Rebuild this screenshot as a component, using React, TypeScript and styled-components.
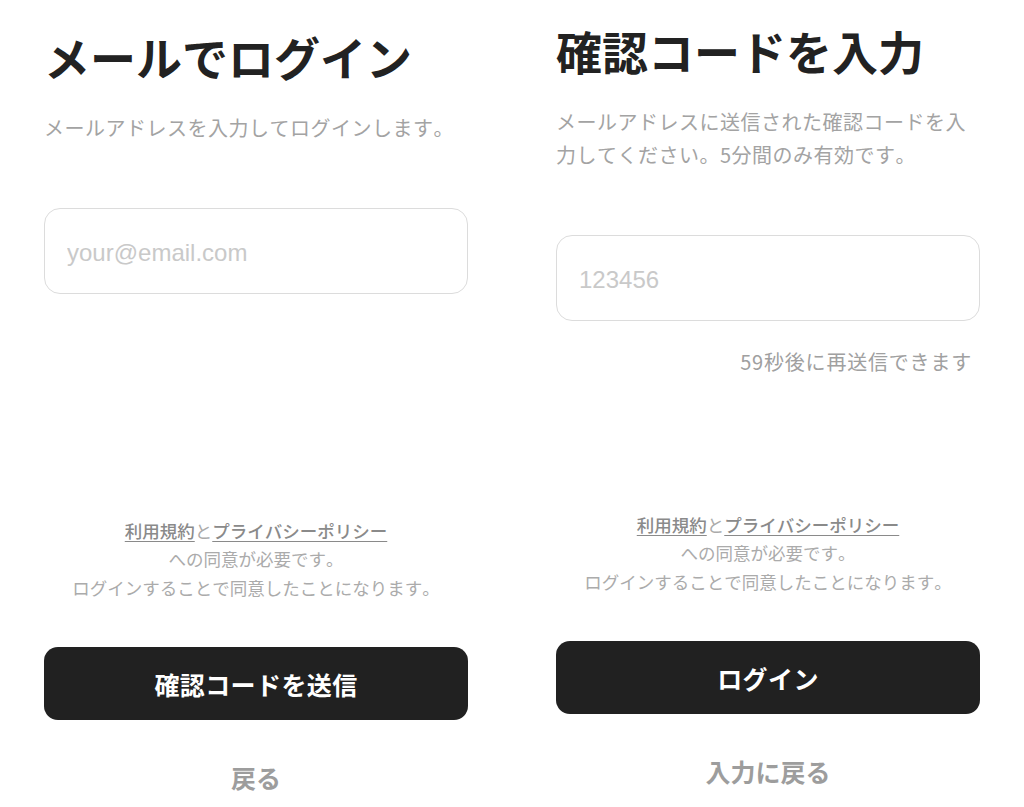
import React from "react";
import styled, { createGlobalStyle } from "styled-components";

const GlobalStyle = createGlobalStyle`
  html, body {
    margin: 0;
    padding: 0;
    background: #ffffff;
  }
  body {
    font-family: "Noto Sans CJK JP", "Noto Sans", sans-serif;
    font-kerning: none;
    text-spacing-trim: space-all;
    -webkit-font-smoothing: antialiased;
  }
  * { box-sizing: border-box; }
`;

const Page = styled.div`
  display: grid;
  grid-template-columns: 424px 424px;
  column-gap: 88px;
  padding: 0 44px;
  width: 1024px;
  height: 807px;
  overflow: hidden;
`;

const Panel = styled.section<{ $top: number; $bottom: number }>`
  display: flex;
  flex-direction: column;
  height: 807px;
  padding-top: ${(p) => p.$top}px;
  padding-bottom: ${(p) => p.$bottom}px;
`;

const Title = styled.h1`
  margin: 0;
  font-size: 46px;
  line-height: 60px;
  font-weight: 700;
  color: #222222;
  letter-spacing: 0;
`;

const Lead = styled.p`
  margin: 25px 0 0;
  font-size: 20px;
  line-height: 33px;
  font-weight: 400;
  color: #a3a3a3;
  letter-spacing: 0.5px;
`;

const Field = styled.input`
  margin-top: 64px;
  width: 100%;
  height: 86px;
  border: 1.5px solid #dcdcdc;
  border-radius: 16px;
  padding: 3px 22px 0;
  font-family: "Liberation Sans", "Noto Sans CJK JP", sans-serif;
  font-size: 24px;
  color: #222;
  background: #fff;
  outline: none;
  &::placeholder {
    color: #c9c9c9;
  }
`;

const Resend = styled.p`
  margin: 26px 8px 0 0;
  text-align: right;
  font-size: 20px;
  line-height: 30px;
  color: #a0a0a0;
  letter-spacing: 0.8px;
`;

const Footer = styled.div`
  margin-top: auto;
  display: flex;
  flex-direction: column;
  align-items: stretch;
`;

const Terms = styled.p`
  margin: 0;
  text-align: center;
  font-size: 17.5px;
  line-height: 28.5px;
  color: #ababab;
`;

const TermsLink = styled.a`
  color: #8a8a8a;
  font-weight: 500;
  text-decoration: underline;
  text-underline-offset: 3px;
  text-decoration-thickness: 1px;
`;

const PrimaryButton = styled.button`
  margin-top: 45px;
  height: 73px;
  width: 100%;
  border: none;
  border-radius: 14px;
  background: #212121;
  color: #ffffff;
  font-family: "Noto Sans CJK JP", sans-serif;
  font-kerning: none;
  font-size: 25px;
  font-weight: 700;
  letter-spacing: 0.4px;
`;

const BackButton = styled.button`
  margin-top: 37px;
  height: 40px;
  border: none;
  background: none;
  align-self: center;
  font-family: "Noto Sans CJK JP", sans-serif;
  font-kerning: none;
  font-size: 25px;
  font-weight: 700;
  color: #9d9d9d;
  padding: 0;
`;

const Line = styled.span`
  display: block;
`;

function TermsBlock() {
  return (
    <Terms>
      <Line>
        <TermsLink>利用規約</TermsLink>と<TermsLink>プライバシーポリシー</TermsLink>
      </Line>
      <Line>への同意が必要です。</Line>
      <Line>ログインすることで同意したことになります。</Line>
    </Terms>
  );
}

export default function App() {
  return (
    <>
      <GlobalStyle />
      <Page>
        <Panel $top={26} $bottom={10}>
          <Title>メールでログイン</Title>
          <Lead>メールアドレスを入力してログインします。</Lead>
          <Field type="email" placeholder="your@email.com" />
          <Footer>
            <TermsBlock />
            <PrimaryButton>確認コードを送信</PrimaryButton>
            <BackButton>戻る</BackButton>
          </Footer>
        </Panel>
        <Panel $top={20} $bottom={16}>
          <Title>確認コードを入力</Title>
          <Lead>メールアドレスに送信された確認コードを入力してください。5分間のみ有効です。</Lead>
          <Field type="text" placeholder="123456" />
          <Resend>59秒後に再送信できます</Resend>
          <Footer>
            <TermsBlock />
            <PrimaryButton>ログイン</PrimaryButton>
            <BackButton>入力に戻る</BackButton>
          </Footer>
        </Panel>
      </Page>
    </>
  );
}
